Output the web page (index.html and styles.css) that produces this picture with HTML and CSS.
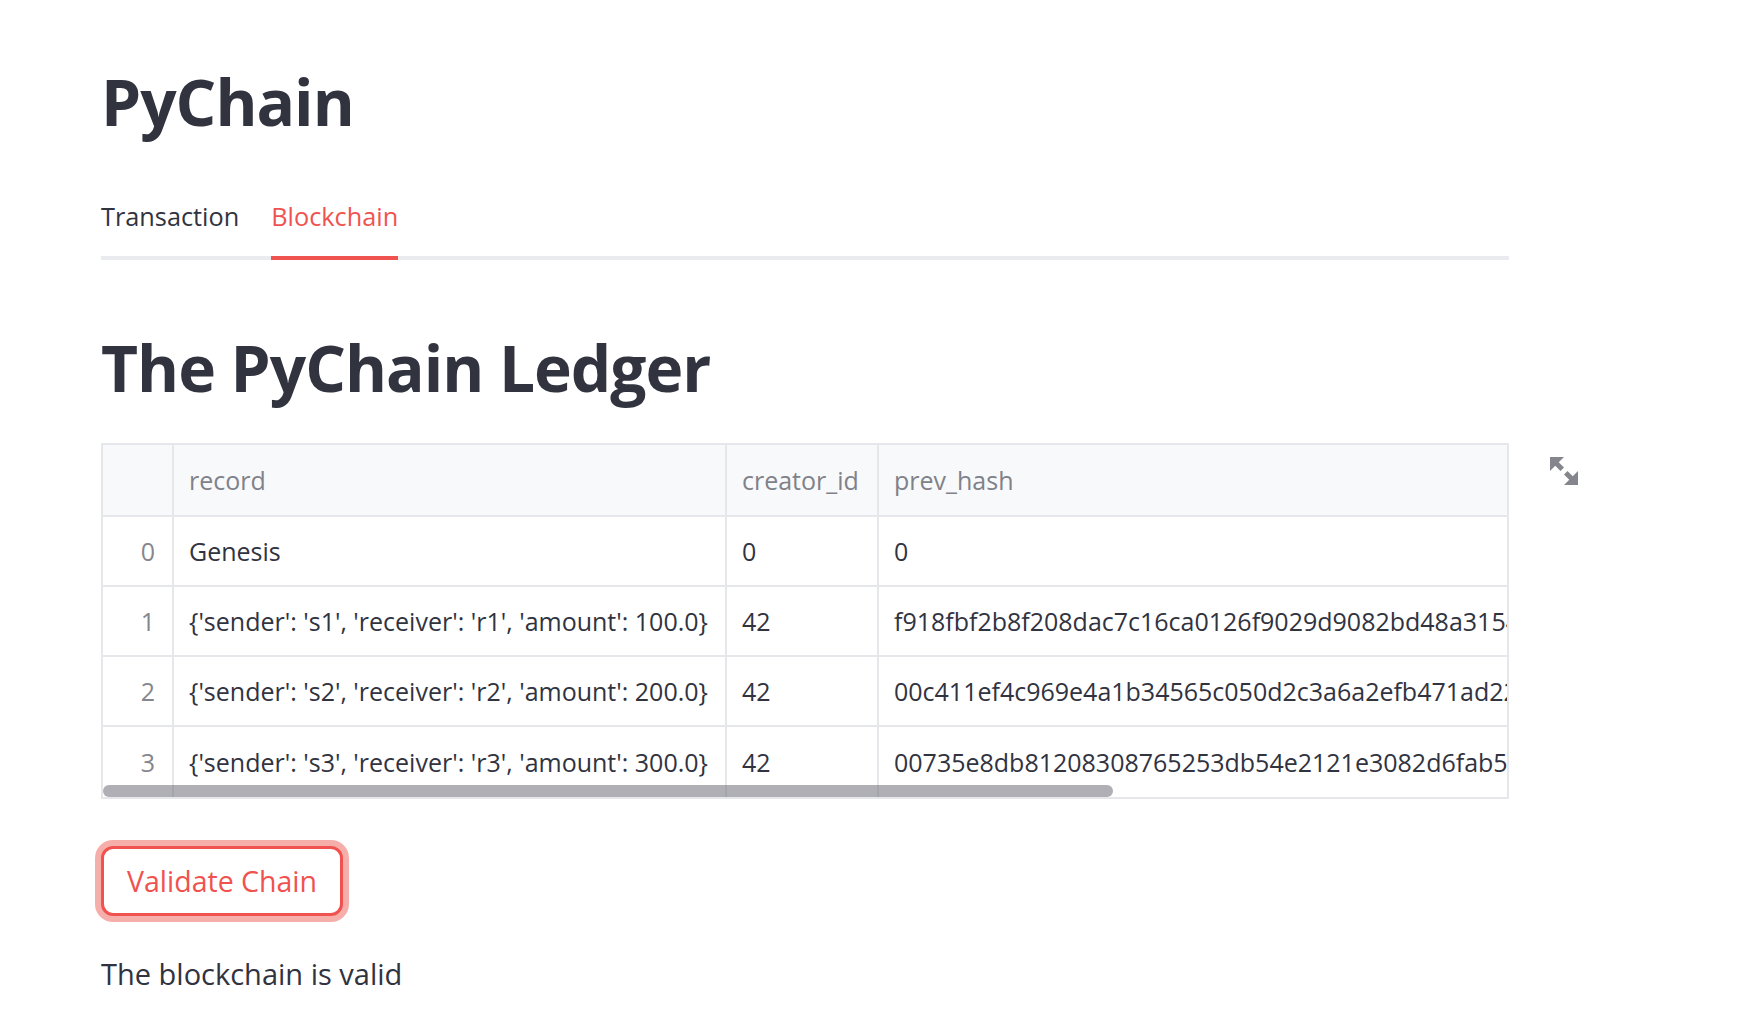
FILE: index.html
```html
<!DOCTYPE html>
<html lang="en">
<head>
<meta charset="utf-8">
<title>PyChain</title>
<link rel="stylesheet" href="styles.css">
</head>
<body>
<main class="page">
  <h1 class="title">PyChain</h1>
  <nav class="tabs">
    <div class="tab">Transaction</div>
    <div class="tab active">Blockchain</div>
  </nav>
  <h2 class="title ledger">The PyChain Ledger</h2>
  <div class="frame">
    <div class="grid">
      <div class="cell head idx"></div>
      <div class="cell head">record</div>
      <div class="cell head">creator_id</div>
      <div class="cell head">prev_hash</div>

      <div class="cell idx">0</div>
      <div class="cell">Genesis</div>
      <div class="cell">0</div>
      <div class="cell">0</div>

      <div class="cell idx">1</div>
      <div class="cell">{'sender': 's1', 'receiver': 'r1', 'amount': 100.0}</div>
      <div class="cell">42</div>
      <div class="cell">f918fbf2b8f208dac7c16ca0126f9029d9082bd48a31549e0b7d2c11f8a4e6</div>

      <div class="cell idx">2</div>
      <div class="cell">{'sender': 's2', 'receiver': 'r2', 'amount': 200.0}</div>
      <div class="cell">42</div>
      <div class="cell">00c411ef4c969e4a1b34565c050d2c3a6a2efb471ad22c8e07f1b9a3d5c24e</div>

      <div class="cell idx end">3</div>
      <div class="cell end">{'sender': 's3', 'receiver': 'r3', 'amount': 300.0}</div>
      <div class="cell end">42</div>
      <div class="cell end">00735e8db81208308765253db54e2121e3082d6fab58a1c94e2d07b63f15aa</div>
    </div>
    <div class="scrollbar"></div>
    <button class="expand" aria-label="View fullscreen">
      <svg viewBox="0 0 8 8" width="28" height="28"><path d="M0 0v4l1.5-1.5 1.5 1.5 1-1-1.5-1.5 1.5-1.5h-4zm5 4l-1 1 1.5 1.5-1.5 1.5h4v-4l-1.5 1.5-1.5-1.5z"/></svg>
    </button>
  </div>
  <button class="btn">Validate Chain</button>
  <p class="msg">The blockchain is valid</p>
</main>
</body>
</html>
```

FILE: styles.css
```css
html, body {
  margin: 0;
  padding: 0;
  background: #ffffff;
}

body {
  font-family: "Open Sans", "Noto Sans", sans-serif;
  color: #31333f;
}

.page {
  width: 1408px;
  padding: 62px 0 0 101px;
}

.title {
  margin: 0;
  font-size: 64px;
  line-height: 80px;
  font-weight: 700;
  color: #31333f;
  letter-spacing: -1px;
}

.tabs {
  display: flex;
  gap: 32px;
  margin-top: 57px;
  border-bottom: 4px solid #eaebee;
}

.tab {
  font-size: 25.3px;
  line-height: 34px;
  padding-bottom: 23px;
  margin-bottom: -4px;
  border-bottom: 4px solid transparent;
  color: #31333f;
}

.tab.active {
  color: #f0534f;
  border-bottom-color: #f0534f;
}

.ledger {
  margin-top: 68px;
}

.frame {
  position: relative;
  margin-top: 35px;
  width: 1408px;
}

.grid {
  display: grid;
  grid-template-columns: 71px 553px 152px 1fr;
  border: 2px solid #e6e7ea;
  overflow: hidden;
  background: #ffffff;
}

.cell {
  height: 70px;
  box-sizing: border-box;
  display: flex;
  align-items: center;
  padding: 0 15px;
  font-size: 25px;
  white-space: nowrap;
  overflow: hidden;
  border-bottom: 2px solid #e6e7ea;
  border-right: 2px solid #e6e7ea;
  color: #31333f;
}

.cell:nth-child(4n) {
  border-right: none;
}

.cell.head {
  height: 72px;
  background: #f8f9fb;
  color: #808189;
}

.cell.idx {
  justify-content: flex-end;
  padding-right: 17px;
  color: #85868e;
}

.cell.end {
  border-bottom: none;
}

.scrollbar {
  position: absolute;
  left: 2px;
  bottom: 2px;
  width: 1010px;
  height: 12px;
  border-radius: 6px;
  background: rgba(110, 110, 120, 0.55);
}

.expand {
  position: absolute;
  left: 1449px;
  top: 14px;
  padding: 0;
  margin: 0;
  border: none;
  background: none;
  width: 28px;
  height: 28px;
  display: block;
}

.expand svg {
  display: block;
  fill: #85868d;
}

.btn {
  display: flex;
  align-items: center;
  margin-top: 47px;
  height: 70px;
  padding: 0 23px;
  border: 3px solid #f0534f;
  border-radius: 12px;
  background: #ffffff;
  box-shadow: 0 0 0 6px #f6aeab;
  color: #f0534f;
  font-family: "Open Sans", "Noto Sans", sans-serif;
  font-size: 28.5px;
  line-height: 40px;
}

.msg {
  margin: 38px 0 0 0;
  font-size: 29px;
  line-height: 40px;
}
```
